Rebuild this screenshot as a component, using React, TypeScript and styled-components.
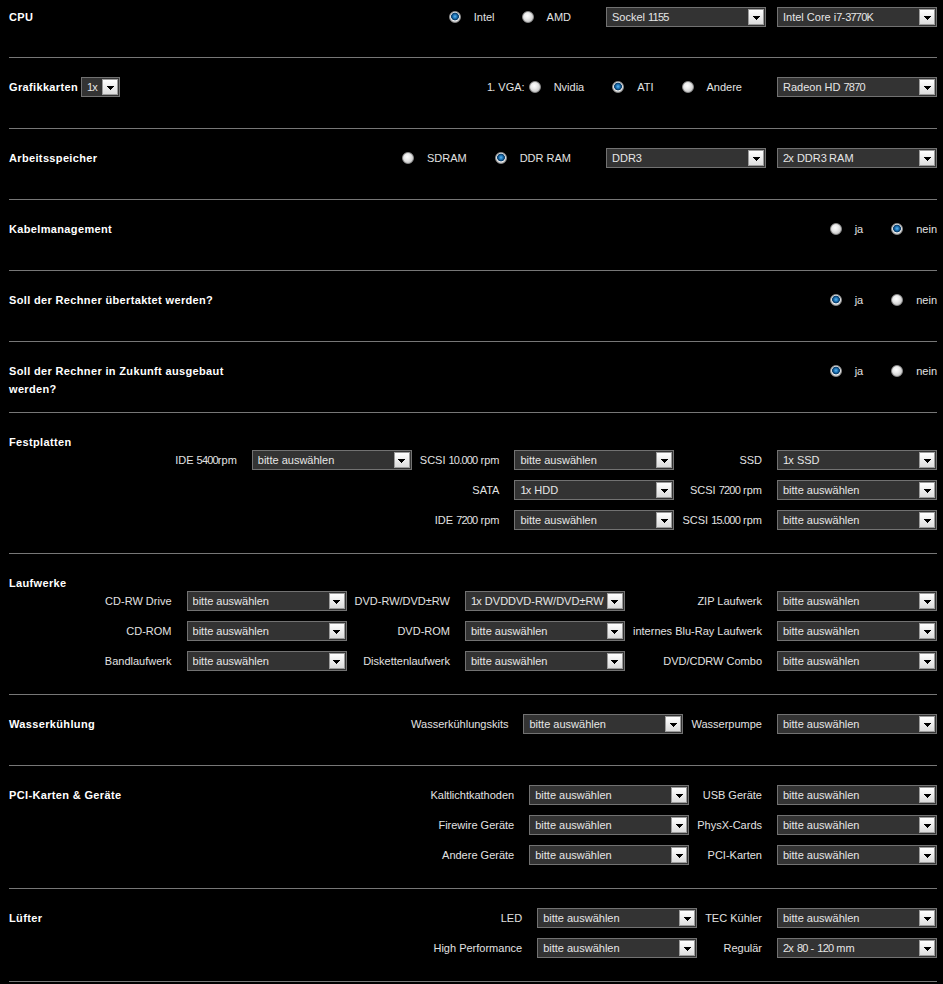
import { Fragment } from 'react'
import type { FC, ReactNode } from 'react'
import styled, { createGlobalStyle } from 'styled-components'

type Field = { label: string; value?: string } | null

const PLACEHOLDER = 'bitte auswählen'

const GlobalStyle = createGlobalStyle`
	html, body {
		margin: 0;
		background: #000;
	}
	body {
		font-family: 'Liberation Sans', Arial, sans-serif;
		font-size: 11px;
		color: #e2e2e2;
	}
`

const Page = styled.div`
	padding: 0 6px 0 9px;
`

const Section = styled.section<{ $stacked?: boolean }>`
	display: flex;
	flex-direction: ${p => (p.$stacked ? 'column' : 'row')};
	justify-content: space-between;
	align-items: ${p => (p.$stacked ? 'flex-end' : 'flex-start')};
	box-sizing: border-box;
	min-height: 71px;
	padding: 19px 0 23px;
	border-bottom: 1px solid #777;

	&:first-child {
		padding-top: 7px;
		min-height: 58px;
	}
`

const TitleGroup = styled.div`
	display: flex;
	align-items: flex-start;
	gap: 3px;
`

const Title = styled.div<{ $stacked?: boolean }>`
	align-self: flex-start;
	box-sizing: border-box;
	max-width: 240px;
	height: ${p => (p.$stacked ? 18 : 20)}px;
	padding-top: 1px;
	line-height: 18px;
	font-weight: bold;
	letter-spacing: 0.35px;
	color: #fff;
`

const Controls = styled.div`
	display: flex;
	align-items: center;
	height: 20px;
`

// the original font draws figures a little narrower than Liberation Sans
const Digits = styled.span`
	letter-spacing: -0.8px;
`

const Prefix = styled.span`
	color: #e2e2e2;
	margin-right: 4px;
`

const Option = styled.span<{ $gap?: number }>`
	display: flex;
	align-items: center;
	margin-left: ${p => p.$gap ?? 28}px;
`

const Radio = styled.span<{ $checked?: boolean }>`
	display: inline-block;
	box-sizing: border-box;
	width: 12px;
	height: 12px;
	border-radius: 50%;
	border: 1px solid #8c8c8c;
	background: ${p =>
		p.$checked
			? 'radial-gradient(circle at 50% 45%, #5ab4ee 0, #1c72b4 2px, #0c416e 3.2px, #0c416e 3.6px, #f4f4f4 4.2px, #d2d2d2 5px, #b4b4b4 100%)'
			: 'radial-gradient(circle at 42% 38%, #ffffff 0, #ececec 35%, #c4c4c4 80%, #a8a8a8 100%)'};
`

const OptionText = styled.span`
	margin-left: 13px;
	color: #e2e2e2;
`

const SelectBox = styled.div<{ $width?: number; $gap?: number }>`
	display: flex;
	align-items: center;
	box-sizing: border-box;
	width: ${p => p.$width ?? 160}px;
	height: 20px;
	margin-left: ${p => p.$gap ?? 0}px;
	padding: 0 1px 0 5px;
	border: 1px solid #727272;
	background: #333;
	color: #e6e6e6;
`

const SelectText = styled.span`
	flex: 1;
	overflow: hidden;
	white-space: nowrap;
`

const ArrowButton = styled.span`
	display: flex;
	align-items: center;
	justify-content: center;
	box-sizing: border-box;
	width: 16px;
	height: 16px;
	padding-top: 2px;
	border: 1px solid #9c9c9c;
	background: linear-gradient(#ffffff, #dcdcdc);
`

const FieldGrid = styled.div<{ $cols: number }>`
	display: grid;
	grid-template-columns: repeat(${p => p.$cols}, auto 160px);
	row-gap: 10px;
	align-items: center;
`

const FieldLabel = styled.span`
	padding: 0 15px 0 8px;
	text-align: right;
	white-space: nowrap;
	color: #e2e2e2;
`

const withDigits = (text: string): ReactNode =>
	text.split(/([\d.]*\d)/).map((part, i) => (i % 2 ? <Digits key={i}>{part}</Digits> : part))

const Select: FC<{ value: string; width?: number; gap?: number }> = ({ value, width, gap }) => (
	<SelectBox $width={width} $gap={gap}>
		<SelectText>{withDigits(value)}</SelectText>
		<ArrowButton>
			<svg width="7" height="4" viewBox="0 0 7 4" shapeRendering="crispEdges">
				<polygon points="0,0 7,0 3.5,4" fill="#000" />
			</svg>
		</ArrowButton>
	</SelectBox>
)

const RadioOption: FC<{ label: string; checked?: boolean; gap?: number }> = ({ label, checked, gap }) => (
	<Option $gap={gap}>
		<Radio $checked={checked} />
		<OptionText>{label}</OptionText>
	</Option>
)

const Fields: FC<{ rows: Field[][] }> = ({ rows }) => (
	<FieldGrid $cols={rows[0].length}>
		{rows.map((row, r) =>
			row.map((field, c) =>
				field ? (
					<Fragment key={`${r}-${c}`}>
						<FieldLabel>{withDigits(field.label)}</FieldLabel>
						<Select value={field.value ?? PLACEHOLDER} />
					</Fragment>
				) : (
					<Fragment key={`${r}-${c}`}>
						<span />
						<span />
					</Fragment>
				),
			),
		)}
	</FieldGrid>
)

const festplatten: Field[][] = [
	[{ label: 'IDE 5400rpm' }, { label: 'SCSI 10.000 rpm' }, { label: 'SSD', value: '1x SSD' }],
	[null, { label: 'SATA', value: '1x HDD' }, { label: 'SCSI 7200 rpm' }],
	[null, { label: 'IDE 7200 rpm' }, { label: 'SCSI 15.000 rpm' }],
]

const laufwerke: Field[][] = [
	[{ label: 'CD-RW Drive' }, { label: 'DVD-RW/DVD±RW', value: '1x DVDDVD-RW/DVD±RW' }, { label: 'ZIP Laufwerk' }],
	[{ label: 'CD-ROM' }, { label: 'DVD-ROM' }, { label: 'internes Blu-Ray Laufwerk' }],
	[{ label: 'Bandlaufwerk' }, { label: 'Diskettenlaufwerk' }, { label: 'DVD/CDRW Combo' }],
]

const wasser: Field[][] = [[{ label: 'Wasserkühlungskits' }, { label: 'Wasserpumpe' }]]

const pci: Field[][] = [
	[{ label: 'Kaltlichtkathoden' }, { label: 'USB Geräte' }],
	[{ label: 'Firewire Geräte' }, { label: 'PhysX-Cards' }],
	[{ label: 'Andere Geräte' }, { label: 'PCI-Karten' }],
]

const luefter: Field[][] = [
	[{ label: 'LED' }, { label: 'TEC Kühler' }],
	[{ label: 'High Performance' }, { label: 'Regulär', value: '2x 80 - 120 mm' }],
]

const YesNo: FC<{ yes: boolean }> = ({ yes }) => (
	<Controls>
		<RadioOption label="ja" checked={yes} gap={0} />
		<RadioOption label="nein" checked={!yes} />
	</Controls>
)

export default function App() {
	return (
		<Page>
			<GlobalStyle />

			<Section>
				<Title>CPU</Title>
				<Controls>
					<RadioOption label="Intel" checked gap={0} />
					<RadioOption label="AMD" gap={27} />
					<Select value="Sockel 1155" gap={35} />
					<Select value="Intel Core i7-3770K" gap={11} />
				</Controls>
			</Section>

			<Section>
				<TitleGroup>
					<Title>Grafikkarten</Title>
					<Select value="1x" width={39} />
				</TitleGroup>
				<Controls>
					<Prefix>{withDigits('1. VGA:')}</Prefix>
					<RadioOption label="Nvidia" gap={0} />
					<RadioOption label="ATI" checked />
					<RadioOption label="Andere" />
					<Select value="Radeon HD 7870" gap={35} />
				</Controls>
			</Section>

			<Section>
				<Title>Arbeitsspeicher</Title>
				<Controls>
					<RadioOption label="SDRAM" gap={0} />
					<RadioOption label="DDR RAM" checked />
					<Select value="DDR3" gap={35} />
					<Select value="2x DDR3 RAM" gap={11} />
				</Controls>
			</Section>

			<Section>
				<Title>Kabelmanagement</Title>
				<YesNo yes={false} />
			</Section>

			<Section>
				<Title>Soll der Rechner übertaktet werden?</Title>
				<YesNo yes />
			</Section>

			<Section>
				<Title>Soll der Rechner in Zukunft ausgebaut werden?</Title>
				<YesNo yes />
			</Section>

			<Section $stacked>
				<Title $stacked>Festplatten</Title>
				<Fields rows={festplatten} />
			</Section>

			<Section $stacked>
				<Title $stacked>Laufwerke</Title>
				<Fields rows={laufwerke} />
			</Section>

			<Section>
				<Title>Wasserkühlung</Title>
				<Fields rows={wasser} />
			</Section>

			<Section>
				<Title>PCI-Karten &amp; Geräte</Title>
				<Fields rows={pci} />
			</Section>

			<Section>
				<Title>Lüfter</Title>
				<Fields rows={luefter} />
			</Section>
		</Page>
	)
}
